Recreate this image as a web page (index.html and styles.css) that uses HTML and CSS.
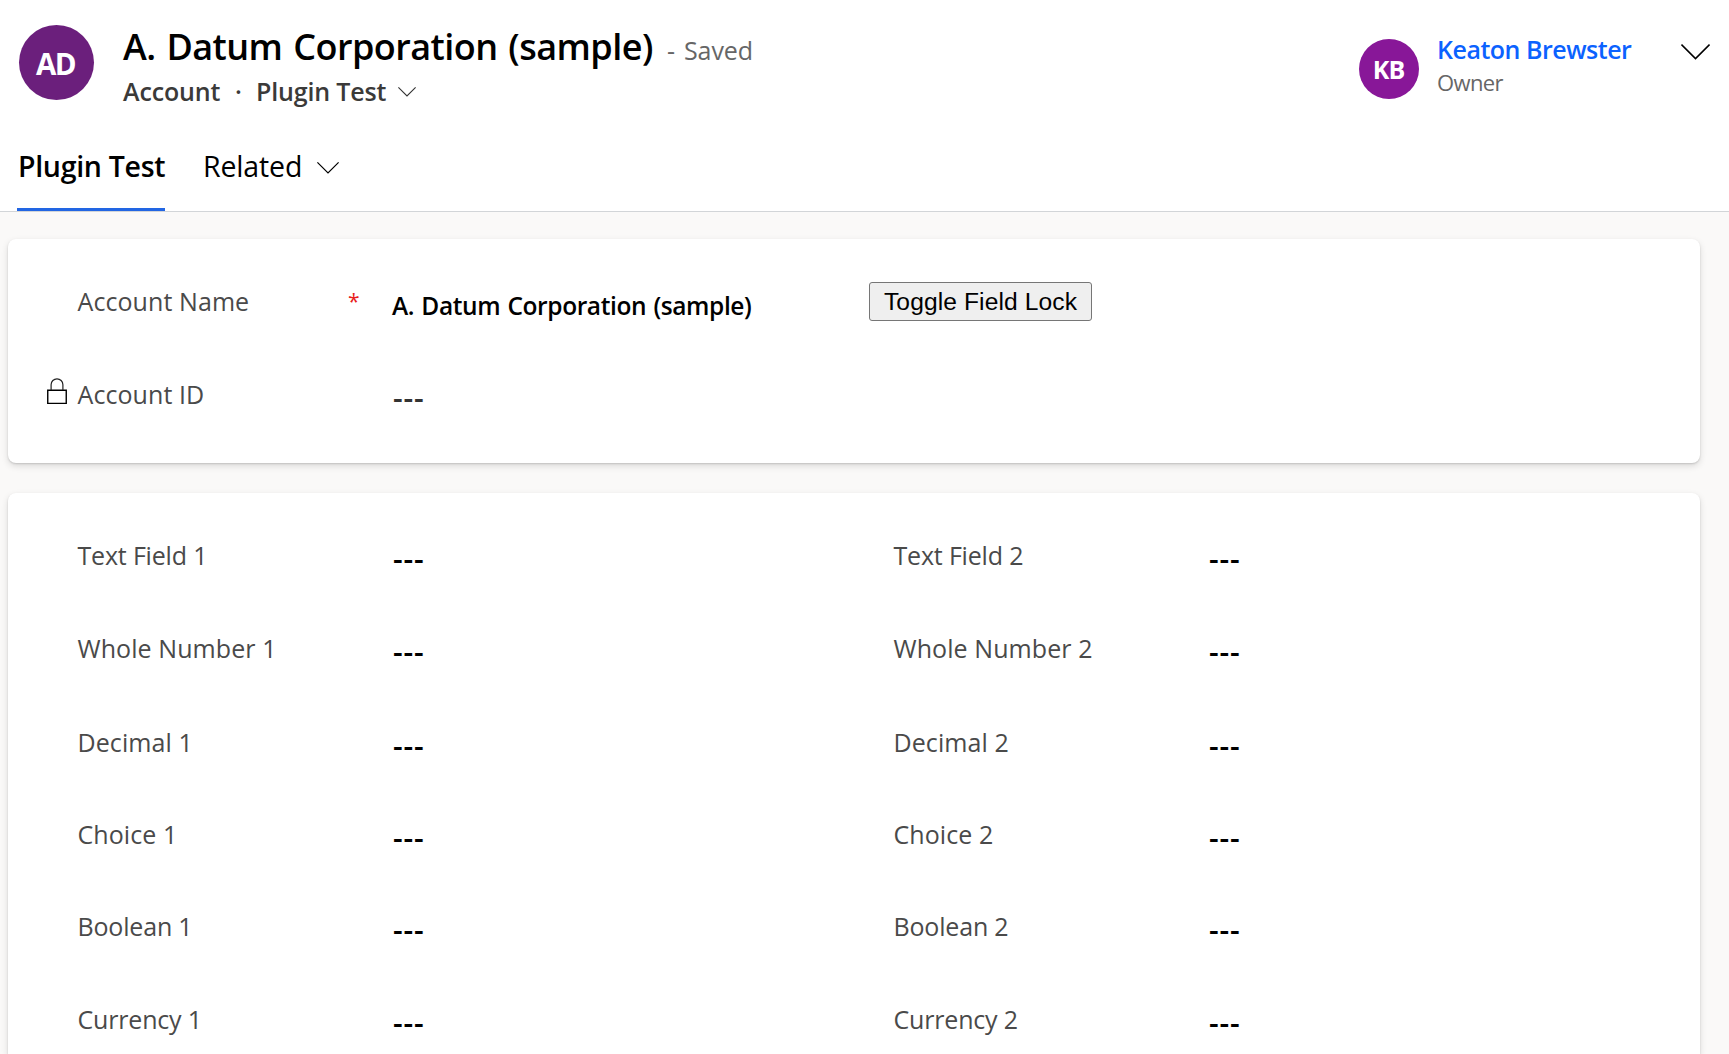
FILE: index.html
```
<!DOCTYPE html>
<html lang="en">
<head>
<meta charset="utf-8">
<title>A. Datum Corporation (sample)</title>
<link rel="stylesheet" href="styles.css">
</head>
<body>
<header class="header">
  <div class="record">
    <div class="avatar avatar-account">AD</div>
    <div class="record-info">
      <div class="title-row">
        <h1 class="title">A. Datum Corporation (sample)</h1>
        <span class="saved"><span class="saved-dash">-</span>Saved</span>
      </div>
      <div class="subtitle">
        <span class="entity">Account</span>
        <span class="dot">·</span>
        <span class="form-name">Plugin Test</span>
        <svg class="form-chevron" width="18" height="10" viewBox="0 0 18 10"><path d="M.4.4 9 9 17.6.4" fill="none" stroke="#333" stroke-width="1.1"/></svg>
      </div>
    </div>
    <div class="owner">
      <div class="avatar avatar-owner">KB</div>
      <div class="owner-info">
        <a class="owner-name">Keaton Brewster</a>
        <span class="owner-label">Owner</span>
      </div>
      <svg class="expand-chevron" width="29" height="16" viewBox="0 0 29 16"><path d="M.5.6 14.5 14.6 28.5.6" fill="none" stroke="#000" stroke-width="1.5"/></svg>
    </div>
  </div>
  <nav class="tabs">
    <a class="tab tab-active">Plugin Test</a>
    <a class="tab tab-related">Related
      <svg class="tab-chevron" width="22" height="12" viewBox="0 0 22 12"><path d="M.4.4 11 11 21.6.4" fill="none" stroke="#000" stroke-width="1.2"/></svg>
    </a>
  </nav>
</header>
<main class="content">
  <section class="card card-summary">
    <div class="row">
      <div class="field">
        <span class="label">Account Name</span><span class="required">*</span>
        <span class="value value-text">A. Datum Corporation (sample)</span>
      </div>
      <button class="toggle" type="button">Toggle Field Lock</button>
    </div>
    <div class="row">
      <div class="field">
        <svg class="lock" width="20" height="27" viewBox="0 0 20 27"><path d="M.75 12.25H19.25V25.4H.75Z" fill="none" stroke="#000" stroke-width="1.4"/><path d="M4.1 12V6.7a5.9 5.9 0 0 1 11.8 0V12" fill="none" stroke="#222" stroke-width="1.2"/></svg>
        <span class="label">Account ID</span>
        <span class="value value-locked">---</span>
      </div>
    </div>
  </section>
  <section class="card card-fields">
    <div class="row">
      <div class="field"><span class="label label-tight">Text Field 1</span><span class="value">---</span></div>
      <div class="field"><span class="label label-tight">Text Field 2</span><span class="value">---</span></div>
    </div>
    <div class="row row-tall">
      <div class="field"><span class="label">Whole Number 1</span><span class="value">---</span></div>
      <div class="field"><span class="label">Whole Number 2</span><span class="value">---</span></div>
    </div>
    <div class="row row-short">
      <div class="field"><span class="label">Decimal 1</span><span class="value">---</span></div>
      <div class="field"><span class="label">Decimal 2</span><span class="value">---</span></div>
    </div>
    <div class="row row-short">
      <div class="field"><span class="label">Choice 1</span><span class="value">---</span></div>
      <div class="field"><span class="label">Choice 2</span><span class="value">---</span></div>
    </div>
    <div class="row">
      <div class="field"><span class="label label-tight">Boolean 1</span><span class="value">---</span></div>
      <div class="field"><span class="label label-tight">Boolean 2</span><span class="value">---</span></div>
    </div>
    <div class="row row-last">
      <div class="field"><span class="label label-tight">Currency 1</span><span class="value">---</span></div>
      <div class="field"><span class="label label-tight">Currency 2</span><span class="value">---</span></div>
    </div>
  </section>
</main>
</body>
</html>
```

FILE: styles.css
```
* { box-sizing: border-box; }
body {
  margin: 0;
  height: 1054px;
  overflow: hidden;
  display: flex;
  flex-direction: column;
  background: #faf9f8;
  font-family: "Open Sans", "Noto Sans", sans-serif;
  color: #000;
}
svg { display: block; flex: none; }

.header {
  flex: none;
  height: 212px;
  display: flex;
  flex-direction: column;
  justify-content: space-between;
  background: #fff;
  border-bottom: 1px solid #d2d5d8;
}
.record { display: flex; padding: 21px 19px 0; }
.avatar {
  flex: none;
  display: flex;
  align-items: center;
  justify-content: center;
  border-radius: 50%;
  color: #fff;
  font-weight: 600;
}
.avatar-account { width: 75px; height: 75px; margin-top: 4px; background: #6b1f7c; font-size: 29.5px; font-weight: 700; letter-spacing: -1.5px; padding: 1px 2px 0 0; }
.avatar-owner { width: 60px; height: 60px; margin-top: 18px; background: #881798; font-size: 25px; font-weight: 700; letter-spacing: -1px; padding-right: 1px; }

.record-info { margin-left: 29px; }
.title-row { display: flex; align-items: baseline; height: 50px; }
.title { margin: 0; font-size: 36px; line-height: 51px; font-weight: 600; letter-spacing: -.54px; word-spacing: 2px; white-space: nowrap; width: 544px; }
.saved { font-size: 25px; letter-spacing: -.1px; color: #666; white-space: nowrap; }
.saved-dash { display: inline-block; width: 17px; }
.subtitle { display: flex; margin-top: 3px; font-size: 25px; line-height: 34px; font-weight: 600; color: #3b3a39; }
.entity { width: 98px; letter-spacing: -.15px; }
.dot { width: 35px; padding-left: 14px; }
.form-name { width: 141px; letter-spacing: -.16px; white-space: nowrap; }
.form-chevron { margin-top: 13px; margin-left: 1px; }

.owner { display: flex; margin-left: auto; }
.owner-info { display: flex; flex-direction: column; margin: 11px 0 0 18px; width: 244px; }
.owner-name { font-size: 25px; line-height: 34px; font-weight: 600; letter-spacing: -.49px; color: #0b62ff; }
.owner-label { margin-top: 2px; font-size: 22px; line-height: 28px; letter-spacing: -.6px; color: #666; }
.expand-chevron { margin-top: 23px; }

.tabs { display: flex; padding-left: 17px; gap: 38px; font-size: 28.5px; line-height: 40px; }
.tab { height: 65px; }
.tab-active { width: 148px; padding-left: 1px; font-weight: 600; letter-spacing: -.3px; border-bottom: 3px solid #2266e3; white-space: nowrap; }
.tab-related { display: flex; letter-spacing: -.15px; }
.tab-chevron { margin: 16px 0 0 14.5px; }

.content { flex: 1; min-height: 0; padding: 27px 29px 0 8px; }
.card {
  padding: 45px 0 0 38px;
  border-radius: 8px;
  background: #fff;
  box-shadow: 0 3px 7px rgba(0, 0, 0, .13), 0 1px 2px rgba(0, 0, 0, .14);
}
.card-summary { height: 224px; }
.card-fields { height: 561px; margin-top: 30px; border-radius: 8px 8px 0 0; }
.row { display: flex; height: 93px; }
.row-tall { height: 94px; }
.row-short { height: 92px; }
.row-last { height: 50px; }
.field { width: 816px; padding-left: 31.5px; display: flex; flex: none; line-height: 34px; }
.label { width: 270.5px; font-size: 25px; color: #4a4a4a; letter-spacing: .08px; white-space: nowrap; }
.label-tight { letter-spacing: -.18px; }
.required { width: 45px; font-size: 21px; color: #e81c1c; }
.value { margin: 4px 0 0 45px; font-size: 30px; font-weight: 600; letter-spacing: .85px; }
.value-text { margin: 5px 0 0 -1px; font-size: 24.5px; letter-spacing: -.4px; word-spacing: 1.3px; white-space: nowrap; }
.value-locked { color: #333; }
.lock { margin: 1px 10.5px 0 -30.5px; }

.toggle {
  flex: none;
  width: 223px;
  height: 39px;
  margin: -2px 0 0 7px;
  padding: 0;
  border: 1px solid #767676;
  border-radius: 3px;
  background: #efefef;
  color: #000;
  font: 24.6px/35px "Liberation Sans", sans-serif;
  letter-spacing: .1px;
}
```
